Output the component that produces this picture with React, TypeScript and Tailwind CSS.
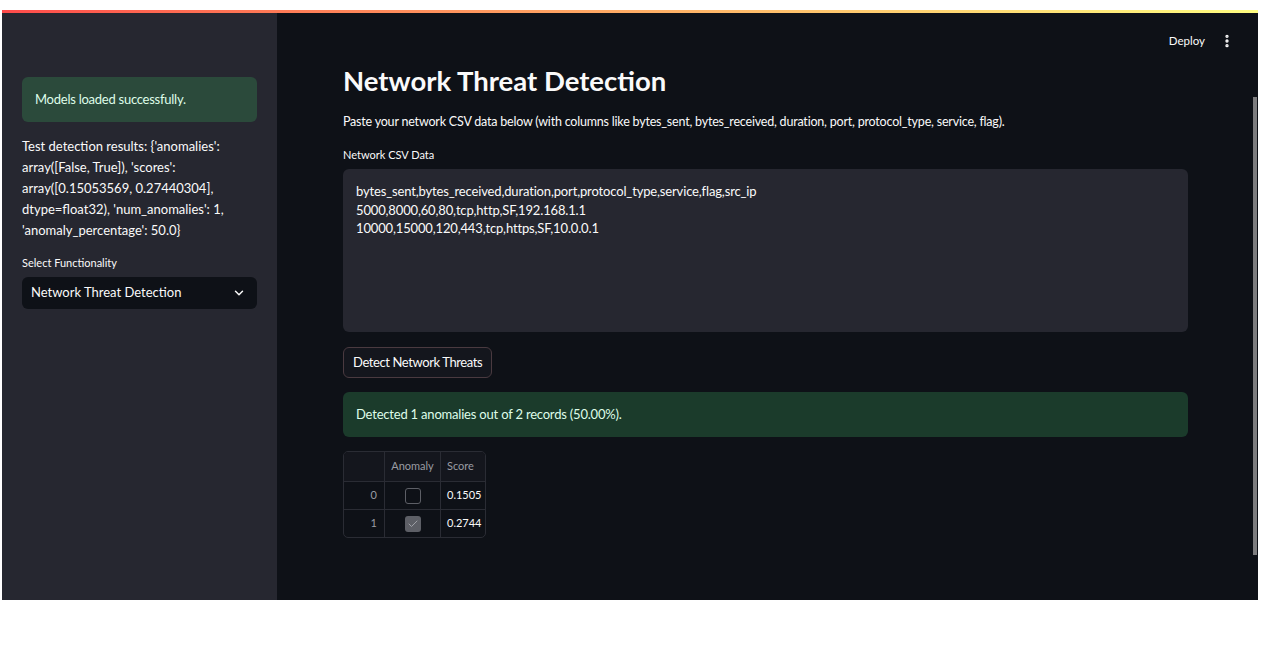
import { ChevronDown, EllipsisVertical, Check } from "lucide-react";

const SIDEBAR_RESULT =
    "Test detection results: {'anomalies': array([False, True]), 'scores': array([0.15053569, 0.27440304], dtype=float32), 'num_anomalies': 1, 'anomaly_percentage': 50.0}";

const CSV_LINES = [
    "bytes_sent,bytes_received,duration,port,protocol_type,service,flag,src_ip",
    "5000,8000,60,80,tcp,http,SF,192.168.1.1",
    "10000,15000,120,443,tcp,https,SF,10.0.0.1",
];

const ROWS = [
    { idx: 0, anomaly: false, score: "0.1505" },
    { idx: 1, anomaly: true, score: "0.2744" },
];

const Sidebar = () => {
    return (
        <aside className="w-[275px] shrink-0 bg-[#262730] px-[20px] pt-[64px]">
            <div className="rounded-[6px] bg-[#2b4a3b] px-[13px] py-[14px] text-[13px] leading-[17px] tracking-[-0.25px] text-[#dffde9]">
                Models loaded successfully.
            </div>
            <p className="mt-[14px] text-[13px] leading-[21px] text-[#fafafa]">{SIDEBAR_RESULT}</p>
            <div className="mt-[15px] text-[11px] leading-[14px] text-[#fafafa]">Select Functionality</div>
            <div className="mt-[7px] flex h-[32px] items-center justify-between rounded-[6px] bg-[#0e1117] pl-[9px] pr-[11px] text-[13px] text-[#fafafa]">
                <span>Network Threat Detection</span>
                <ChevronDown size={14} strokeWidth={2.5} />
            </div>
        </aside>
    );
};

const ResultTable = () => {
    return (
        <div className="mt-[14px] w-[143px] overflow-hidden rounded-[5px] border border-[#2a2c34] text-[11px]">
            <div className="flex h-[29px] bg-[#14161d] text-[#9a9ca3]">
                <div className="w-[41px] border-r border-[#2a2c34]" />
                <div className="flex w-[56px] items-center justify-center border-r border-[#2a2c34]">Anomaly</div>
                <div className="flex flex-1 items-center pl-[6px]">Score</div>
            </div>
            {ROWS.map((row) => (
                <div key={row.idx} className="flex h-[28px] border-t border-[#2a2c34]">
                    <div className="flex w-[41px] items-center justify-end border-r border-[#2a2c34] pr-[7px] text-[#9a9ca3]">
                        {row.idx}
                    </div>
                    <div className="flex w-[56px] items-center justify-center border-r border-[#2a2c34]">
                        {row.anomaly ? (
                            <div className="flex h-[16px] w-[16px] items-center justify-center rounded-[3px] bg-[#5d5f66]">
                                <Check size={12} strokeWidth={2} className="text-[#9ea0a6]" />
                            </div>
                        ) : (
                            <div className="h-[16px] w-[16px] rounded-[3px] border border-[#5d5f66]" />
                        )}
                    </div>
                    <div className="flex flex-1 items-center pl-[6px] text-[#fafafa]">{row.score}</div>
                </div>
            ))}
        </div>
    );
};

const Main = () => {
    return (
        <main className="relative flex-1 bg-[#0e1117] text-[#fafafa]">
            <div className="flex h-[50px] items-center justify-end gap-[14px] pr-[23px] pt-[6px] text-[11.5px]">
                <span>Deploy</span>
                <EllipsisVertical size={16} strokeWidth={3} />
            </div>
            <div className="ml-[66px] w-[845px]">
                <h1 className="text-[27.5px] font-bold leading-[36px]">Network Threat Detection</h1>
                <p className="mt-[14px] text-[12.5px] leading-[18px] tracking-[-0.2px]">
                    Paste your network CSV data below (with columns like bytes_sent, bytes_received, duration, port,
                    protocol_type, service, flag).
                </p>
                <div className="mt-[17px] text-[11px] leading-[14px]">Network CSV Data</div>
                <div className="mt-[7px] h-[163px] rounded-[6px] bg-[#262730] px-[13px] pt-[13px] text-[13px] leading-[18.5px] tracking-[-0.15px]">
                    {CSV_LINES.map((line) => (
                        <div key={line}>{line}</div>
                    ))}
                </div>
                <button className="mt-[15px] h-[31px] rounded-[6px] border border-[#4a3a40] bg-[#14161d] px-[9px] text-[13px] tracking-[-0.4px] text-[#fafafa]">
                    Detect Network Threats
                </button>
                <div className="mt-[14px] flex h-[45px] items-center rounded-[6px] bg-[#1b3b2b] px-[13px] text-[13px] tracking-[-0.2px] text-[#dffde9]">
                    Detected 1 anomalies out of 2 records (50.00%).
                </div>
                <ResultTable />
            </div>
            <div className="absolute right-[1px] top-[84px] h-[458px] w-[4px] bg-[#7d7d7f]" />
        </main>
    );
};

const App = () => {
    return (
        <div
            className="h-[647px] w-[1265px] overflow-hidden bg-white pl-[2px] pt-[10px]"
            style={{ fontFamily: 'Lato, "Noto Sans", "Liberation Sans", sans-serif' }}
        >
            <div className="flex h-[590px] w-[1256px] flex-col">
                <div className="h-[3px] bg-gradient-to-r from-[#ff4b4b] to-[#fffd80]" />
                <div className="flex flex-1">
                    <Sidebar />
                    <Main />
                </div>
            </div>
        </div>
    );
};

export default App;
